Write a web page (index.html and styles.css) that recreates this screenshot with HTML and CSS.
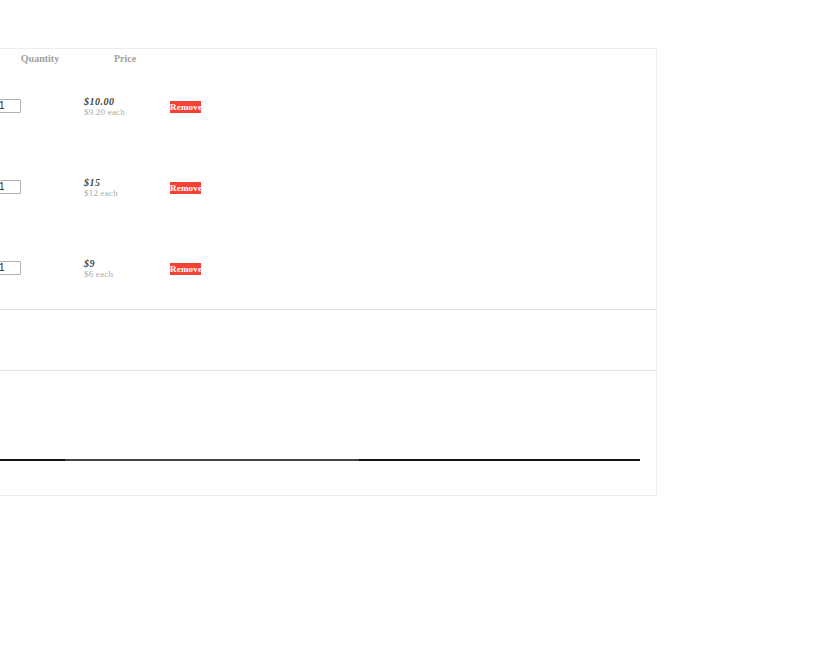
FILE: index.html
```html
<!DOCTYPE html>
<html>
<head>
  <title>Cart</title>
  <link rel="stylesheet" href="styles.css">
</head>
<body>
  <div class="cart">
    <div class="items">
      <div class="row head">
        <div class="qty">Quantity</div>
        <div class="price">Price</div>
      </div>
      <div class="row item">
        <div class="qty"><input class="qty-input" type="text" value="1"></div>
        <div class="price">
          <div class="now">$10.00</div>
          <div class="each">$9.20 each</div>
        </div>
        <a class="remove" href="#">Remove</a>
      </div>
      <div class="row item">
        <div class="qty"><input class="qty-input" type="text" value="1"></div>
        <div class="price">
          <div class="now">$15</div>
          <div class="each">$12 each</div>
        </div>
        <a class="remove" href="#">Remove</a>
      </div>
      <div class="row item">
        <div class="qty"><input class="qty-input" type="text" value="1"></div>
        <div class="price">
          <div class="now">$9</div>
          <div class="each">$6 each</div>
        </div>
        <a class="remove" href="#">Remove</a>
      </div>
    </div>
    <div class="middle"></div>
    <div class="total">
      <hr class="total-line">
    </div>
  </div>
</body>
</html>
```

FILE: styles.css
```css
body {
  margin: 0;
  background-color: #fff;
  font-family: "Liberation Serif", serif;
  overflow: hidden;
}

.cart {
  width: 705px;
  margin: 48px 0 0 -50px;
  border: 1px solid #ececec;
}

.items {
  border-bottom: 1px solid #e0e0e0;
}

.row {
  display: flex;
  padding-left: 49px;
}

.head {
  height: 17px;
  padding-top: 2px;
  box-sizing: border-box;
  align-items: center;
  font-size: 10px;
  font-weight: bold;
  color: #a0a0a0;
}

.head .qty,
.head .price {
  text-align: center;
}

.head .qty {
  padding-left: 4px;
  box-sizing: border-box;
}

.item {
  height: 81px;
  align-items: center;
}

.qty {
  width: 84px;
  margin-left: -4px;
}

.qty-input {
  display: block;
  box-sizing: border-box;
  width: 24px;
  height: 14px;
  margin: 0 0 2px 1px;
  padding: 0 1px;
  border: 1px solid #b0b0b0;
  border-radius: 1px;
  font-family: "Liberation Sans", sans-serif;
  font-size: 10px;
  color: #222;
}

.price {
  width: 82px;
  margin-left: 4px;
}

.item .price {
  padding-top: 1px;
}

.now {
  font-size: 10px;
  line-height: 11px;
  font-weight: bold;
  font-style: italic;
  letter-spacing: 0.5px;
  color: #444;
}

.each {
  font-size: 9px;
  line-height: 11px;
  letter-spacing: 0.2px;
  color: #aaa;
}

.remove {
  margin-left: 4px;
  padding: 1px 0;
  width: 31px;
  background-color: #f44336;
  color: #fff;
  font-size: 9px;
  line-height: 10px;
  font-weight: bold;
  letter-spacing: 0.2px;
  text-align: center;
  text-decoration: none;
  white-space: nowrap;
}

.middle {
  height: 60px;
  border-bottom: 1px solid #e4e4e4;
}

.total {
  height: 124px;
  padding: 0 16px 0 0;
}

.total-line {
  height: 2px;
  margin: 0;
  position: relative;
  top: 88px;
  border: none;
  background: linear-gradient(to right, #111 0, #111 114px, #444 114px, #444 408px, #111 408px);
}
```
